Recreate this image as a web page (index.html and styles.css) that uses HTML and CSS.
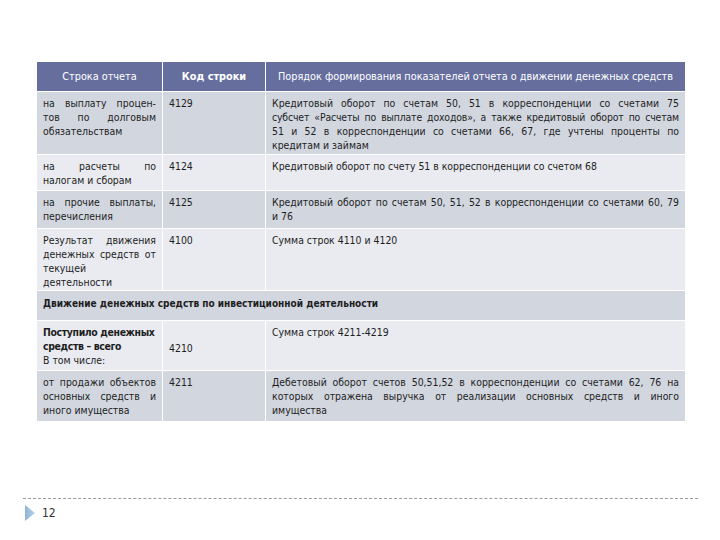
FILE: index.html
```html
<!DOCTYPE html>
<html lang="ru">
<head>
<meta charset="utf-8">
<link rel="stylesheet" href="styles.css">
</head>
<body>
<div class="slide">
  <table class="report">
    <colgroup>
      <col class="c1"><col class="c2"><col class="c3">
    </colgroup>
    <thead>
      <tr class="head">
        <th>Строка отчета</th>
        <th class="bold">Код строки</th>
        <th>Порядок формирования показателей отчета о движении денежных средств</th>
      </tr>
    </thead>
    <tbody>
      <tr class="dark r1">
        <td class="just">на выплату процен- тов по долговым обязательствам</td>
        <td>4129</td>
        <td class="just">
          <span class="jl">Кредитовый оборот по счетам 50, 51 в корреспонденции со счетами 75</span>
          <span class="jl tight">субсчет «Расчеты по выплате доходов», а также кредитовый оборот по счетам</span>
          <span class="jl">51 и 52 в корреспонденции со счетами 66, 67, где учтены проценты по</span>
          <span class="ll">кредитам и займам</span>
        </td>
      </tr>
      <tr class="light r2">
        <td class="just">на расчеты по налогам и сборам</td>
        <td>4124</td>
        <td class="just">Кредитовый оборот по счету 51 в корреспонденции со счетом 68</td>
      </tr>
      <tr class="dark r3">
        <td class="just">на прочие выплаты, перечисления</td>
        <td>4125</td>
        <td class="just">Кредитовый оборот по счетам 50, 51, 52 в корреспонденции со счетами 60, 79 и&nbsp;76</td>
      </tr>
      <tr class="light r4">
        <td class="just">Результат движения денежных средств от текущей деятельности</td>
        <td>4100</td>
        <td class="just">Сумма строк 4110 и 4120</td>
      </tr>
      <tr class="dark section">
        <td colspan="3"><b>Движение денежных средств по инвестиционной деятельности</b></td>
      </tr>
      <tr class="light r5">
        <td><b class="lead">Поступило денежных<br>средств – всего</b><br>В том числе:</td>
        <td class="mid">4210</td>
        <td>Сумма строк 4211-4219</td>
      </tr>
      <tr class="dark r6">
        <td class="just">от продажи объектов основных средств и иного имущества</td>
        <td>4211</td>
        <td class="just">
          <span class="jl">Дебетовый оборот счетов 50,51,52 в корреспонденции со счетами 62, 76 на</span>
          <span class="jl">которых отражена выручка от реализации основных средств и иного</span>
          <span class="ll">имущества</span>
        </td>
      </tr>
    </tbody>
  </table>
  <div class="footer">
    <div class="rule"></div>
    <div class="pagenum">
      <svg class="arrow" width="10" height="16" viewBox="0 0 10 16">
        <defs>
          <linearGradient id="g" x1="0" y1="0" x2="1" y2="0">
            <stop offset="0" stop-color="#8fb4d8"/>
            <stop offset="1" stop-color="#b9d2ea"/>
          </linearGradient>
        </defs>
        <polygon points="0,0 10,8 0,16" fill="url(#g)"/>
      </svg>
      <span>12</span>
    </div>
  </div>
</div>
</body>
</html>
```
FILE: styles.css
```css
html, body {
  margin: 0;
  padding: 0;
  background: #ffffff;
}
.slide {
  width: 720px;
  height: 540px;
  padding-top: 61px;
  box-sizing: border-box;
  font-family: "DejaVu Sans Condensed", "DejaVu Sans", sans-serif;
  font-stretch: condensed;
  color: #1e1e1e;
}
.report {
  margin-left: 36px;
  width: 649px;
  border-collapse: collapse;
  table-layout: fixed;
  font-size: 10.4px;
  line-height: 14px;
}
.report col.c1 { width: 126px; }
.report col.c2 { width: 103px; }
.report col.c3 { width: 420px; }
.report th, .report td {
  border: 1px solid #ffffff;
  padding: 4px 6px 0 6px;
  vertical-align: top;
  text-align: left;
}
.report th {
  background: #666e9e;
  color: #ffffff;
  font-weight: normal;
  font-size: 10.8px;
  text-align: center;
  vertical-align: middle;
  height: 22px;
  padding: 4px 4px 3px 4px;
}
.report th.bold { font-weight: bold; }
.dark td { background: #d2d6df; }
.light td { background: #e9ebf0; }
.report td.just { text-align: justify; }
.report td.mid { vertical-align: middle; }
.jl {
  display: block;
  white-space: nowrap;
  text-align: justify;
  text-align-last: justify;
}
.jl.tight { letter-spacing: -0.15px; }
.ll { display: block; }
.lead {
  white-space: nowrap;
  letter-spacing: -0.35px;
}
.r1 td { height: 58px; }
.r2 td { height: 31px; }
.r3 td { height: 33px; }
.r4 td { height: 57px; }
.report .section td { height: 23px; padding-top: 6px; font-size: 10px; }
.r5 td { height: 45px; }
.r6 td { height: 46px; }
.footer {
  margin-top: 76px;
  padding-left: 23px;
  padding-right: 22px;
}
.rule {
  border-top: 1px dashed #9a9a9a;
  height: 0;
}
.pagenum {
  display: flex;
  align-items: center;
  gap: 7px;
  margin-top: 6px;
  padding-left: 2px;
  font-size: 12px;
  color: #333333;
}
.arrow { display: block; }
```
